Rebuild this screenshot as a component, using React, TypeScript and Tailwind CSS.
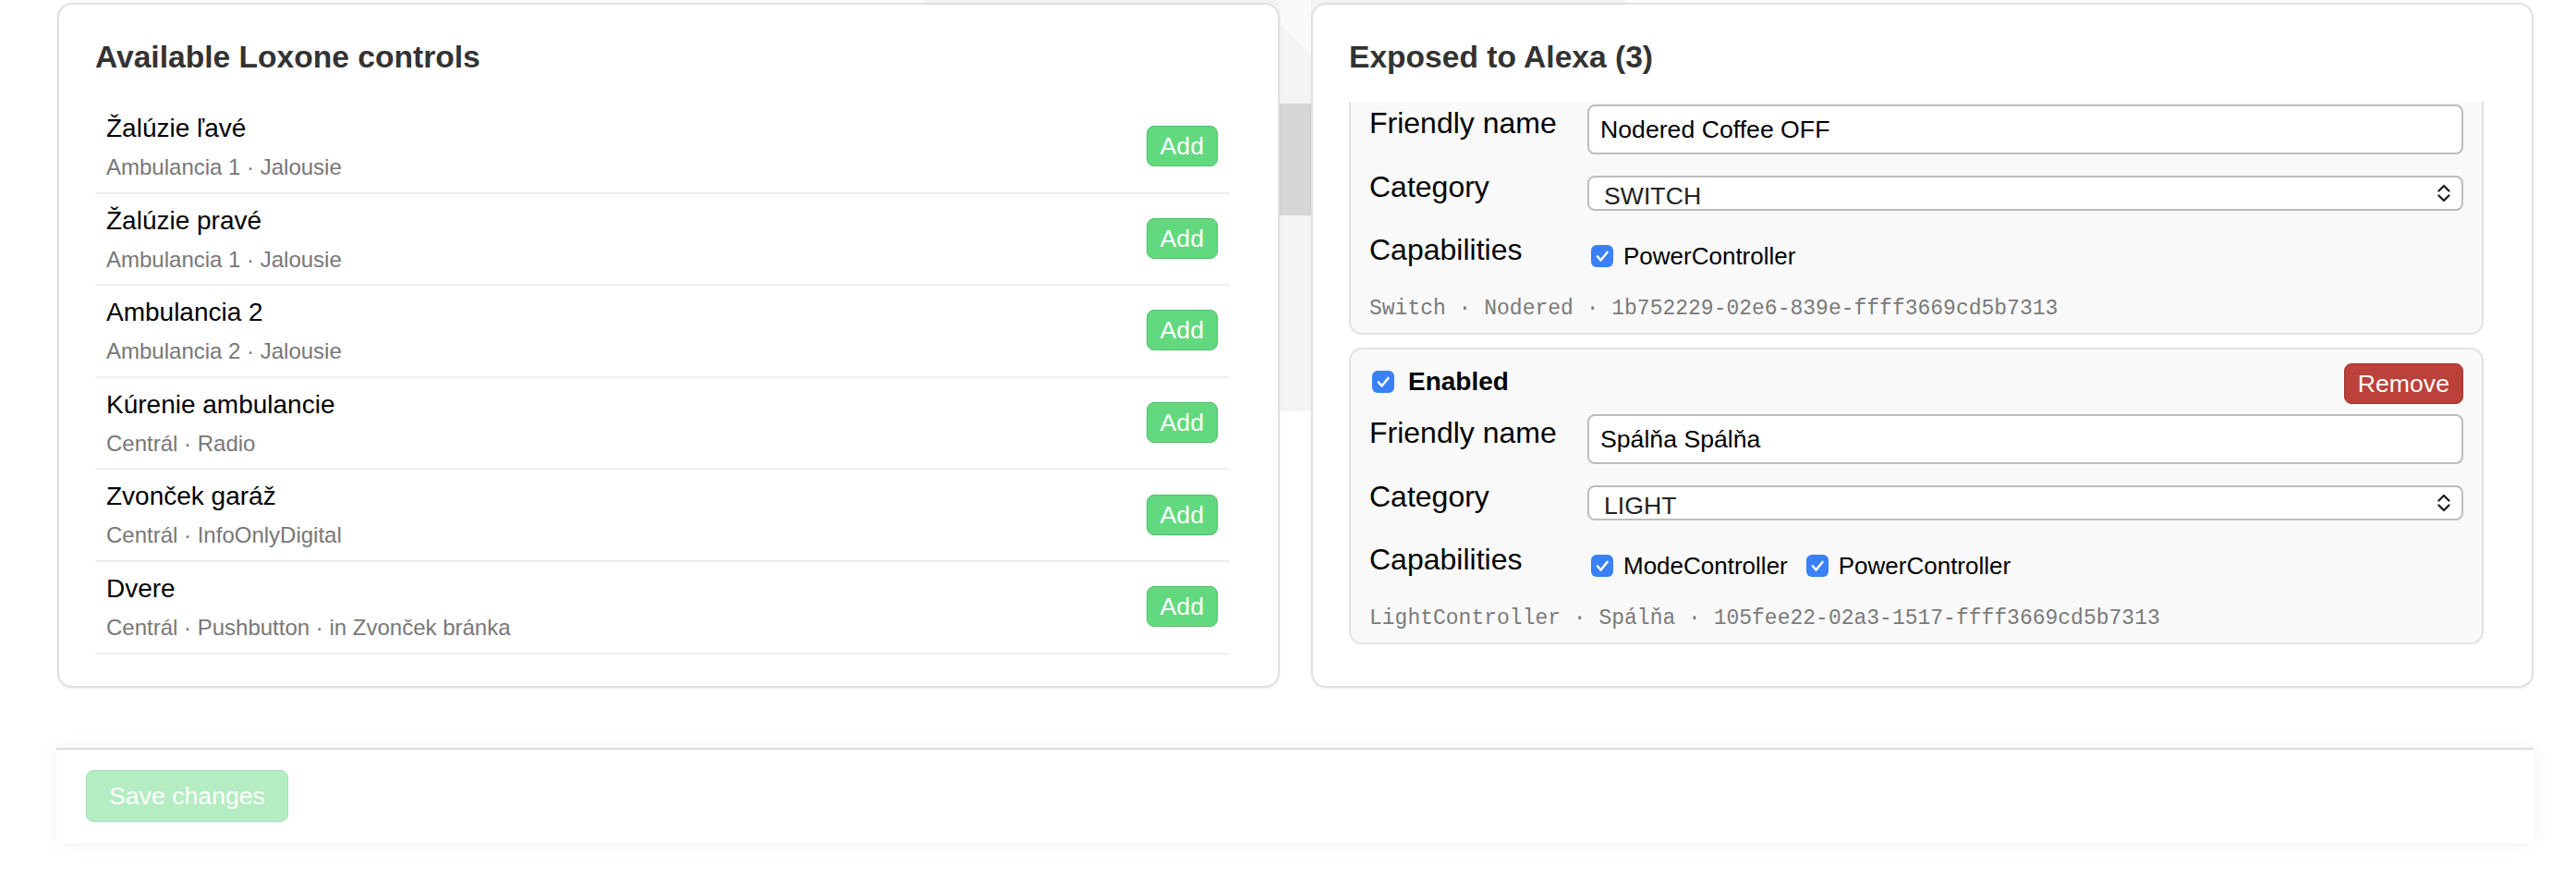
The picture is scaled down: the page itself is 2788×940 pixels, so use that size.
import React, { useLayoutEffect, useRef } from 'react';

const available = [
  { name: 'Žalúzie ľavé', meta: 'Ambulancia 1 · Jalousie' },
  { name: 'Žalúzie pravé', meta: 'Ambulancia 1 · Jalousie' },
  { name: 'Ambulancia 2', meta: 'Ambulancia 2 · Jalousie' },
  { name: 'Kúrenie ambulancie', meta: 'Centrál · Radio' },
  { name: 'Zvonček garáž', meta: 'Centrál · InfoOnlyDigital' },
  { name: 'Dvere', meta: 'Centrál · Pushbutton · in Zvonček bránka' },
];

const exposed = [
  {
    friendly: 'Nodered Coffee ON',
    category: 'SWITCH',
    caps: ['PowerController'],
    footer: 'Switch · Nodered · 0a7f2d14-02e6-839d-ffff3669cd5b7313',
  },
  {
    friendly: 'Nodered Coffee OFF',
    category: 'SWITCH',
    caps: ['PowerController'],
    footer: 'Switch · Nodered · 1b752229-02e6-839e-ffff3669cd5b7313',
  },
  {
    friendly: 'Spálňa Spálňa',
    category: 'LIGHT',
    caps: ['ModeController', 'PowerController'],
    footer: 'LightController · Spálňa · 105fee22-02a3-1517-ffff3669cd5b7313',
  },
];

function Check({ className = '' }: { className?: string }) {
  return (
    <span
      className={`flex h-[24px] w-[24px] shrink-0 items-center justify-center rounded-[6px] bg-[#3a80f6] ${className}`}
    >
      <svg width="24" height="24" viewBox="0 0 24 24" fill="none">
        <path
          d="M7 12.5l3.5 4L17.5 8"
          stroke="white"
          strokeWidth="2.6"
          strokeLinecap="round"
          strokeLinejoin="round"
        />
      </svg>
    </span>
  );
}

function Field({ label, children }: { label: string; children: React.ReactNode }) {
  return (
    <div className="grid grid-cols-[236px_1fr] items-center">
      <div className="mb-[13px] text-[32px] leading-[37px] text-black">{label}</div>
      {children}
    </div>
  );
}

function ExposedCard({ item }: { item: (typeof exposed)[number] }) {
  return (
    <div className="rounded-[14px] border-2 border-[#e2e2e2] bg-[#f9f9f9] px-[20px] pb-[13px] pt-[15px]">
      <div className="flex h-[44px] items-center justify-between">
        <label className="mb-[4px] flex items-center gap-[15px]">
          <Check className="ml-[3px]" />
          <span className="text-[28px] font-bold text-black">Enabled</span>
        </label>
        <button className="h-[44px] rounded-[8px] border border-[#a3332d] bg-[#bb413a] px-[14px] text-[26.67px] text-white">
          Remove
        </button>
      </div>

      <div className="mt-[11px] h-[54px]">
        <Field label="Friendly name">
          <input
            readOnly
            value={item.friendly}
            className="h-[54px] w-full rounded-[8px] border-2 border-[#bdbdbd] bg-white px-[12px] text-[26.67px] text-black outline-none"
          />
        </Field>
      </div>

      <div className="mt-[17px] h-[50px]">
        <Field label="Category">
          <div className="relative">
            <select
              value={item.category}
              onChange={() => {}}
              className="h-[38px] w-full appearance-none rounded-[8px] border-2 border-[#bdbdbd] bg-white pl-[16px] text-[26.67px] text-[#222] outline-none"
            >
              <option>SWITCH</option>
              <option>LIGHT</option>
              <option>THERMOSTAT</option>
            </select>
            <svg
              className="pointer-events-none absolute right-[13px] top-1/2 -translate-y-1/2"
              width="16"
              height="22"
              viewBox="0 0 16 22"
              fill="none"
            >
              <path d="M2.5 8.5L8 3l5.5 5.5M2.5 13.5L8 19l5.5-5.5" stroke="#222" strokeWidth="2.4" strokeLinecap="round" strokeLinejoin="round" />
            </svg>
          </div>
        </Field>
      </div>

      <div className="mt-[18px] h-[50px]">
        <Field label="Capabilities">
          <div className="flex items-center">
            {item.caps.map((c) => (
              <label key={c} className="mr-[16px] flex items-center gap-[11px]">
                <Check className="ml-[4px]" />
                <span className="text-[26px] text-black">{c}</span>
              </label>
            ))}
          </div>
        </Field>
      </div>

      <div className="mt-[19px] font-['Liberation_Mono',monospace] text-[23px] leading-[26px] text-[#7a7a7a]">
        {item.footer}
      </div>
    </div>
  );
}

export default function App() {
  const scrollRef = useRef<HTMLDivElement>(null);

  useLayoutEffect(() => {
    const el = scrollRef.current;
    if (el) el.scrollTop = el.scrollHeight;
  }, []);

  return (
    <div className="relative h-[940px] w-[2788px] overflow-hidden bg-white font-['Liberation_Sans',Arial,sans-serif]">
      {/* background artwork peeking between the panels */}
      <svg className="pointer-events-none absolute left-0 top-0" width="2788" height="940">
        <path d="M1000 0H1760V420Q1400 470 1040 420Z" fill="#f4f4f4" />
        <path d="M1385 25L1419 60V0H1385Z" fill="#fafafa" />
        <rect x="1290" y="112" width="220" height="121" rx="60" fill="#d6d6d6" />
      </svg>

      <div className="relative ml-[62px] mt-[3px] grid w-[2680px] grid-cols-2 gap-[34px]">
        <section className="flex h-[741px] flex-col rounded-[16px] border-2 border-[#e0e0e0] bg-white pb-[34px] pl-[39px] pr-[52px] pt-[38px] shadow-[0_1px_3px_rgba(0,0,0,0.08)]">
          <h2 className="mb-[30px] text-[33.6px] font-bold leading-[37px] text-[#333]">Available Loxone controls</h2>
          <div className="flex-1">
            {available.map((a) => (
              <div
                key={a.name}
                className="flex items-center justify-between border-b-2 border-[#eeeeee] pb-[9px] pl-[12px] pr-[13px] pt-[8px]"
              >
                <div>
                  <div className="text-[28px] leading-[42px] text-black">{a.name}</div>
                  <div className="mt-[3px] text-[24px] leading-[35.6px] text-[#777]">{a.meta}</div>
                </div>
                <button className="h-[44px] rounded-[8px] border border-[#52bd6b] bg-[#63d97f] px-[14px] text-[26.67px] text-white">
                  Add
                </button>
              </div>
            ))}
          </div>
        </section>

        <section className="flex h-[741px] flex-col rounded-[16px] border-2 border-[#e0e0e0] bg-white pb-[34px] pl-[39px] pr-[52px] pt-[38px] shadow-[0_1px_3px_rgba(0,0,0,0.08)]">
          <h2 className="mb-[30px] text-[33.6px] font-bold leading-[37px] text-[#333]">Exposed to Alexa (3)</h2>
          <div ref={scrollRef} className="min-h-0 flex-1 overflow-y-auto [scrollbar-width:none]">
            <div className="flex flex-col gap-[14px] pb-[11px]">
              {exposed.map((e) => (
                <ExposedCard key={e.friendly} item={e} />
              ))}
            </div>
          </div>
        </section>
      </div>

      <div className="relative ml-[61px] mt-[65px] w-[2681px] border-t-2 border-[#dddddd] bg-white pb-[23px] pl-[32px] pt-[22px] shadow-[0_0_20px_rgba(0,0,0,0.06)]">
        <button className="h-[56px] rounded-[8px] border border-[#a5e2b4] bg-[#b3edc1] px-[24px] text-[26.67px] text-white">
          Save changes
        </button>
      </div>
    </div>
  );
}
